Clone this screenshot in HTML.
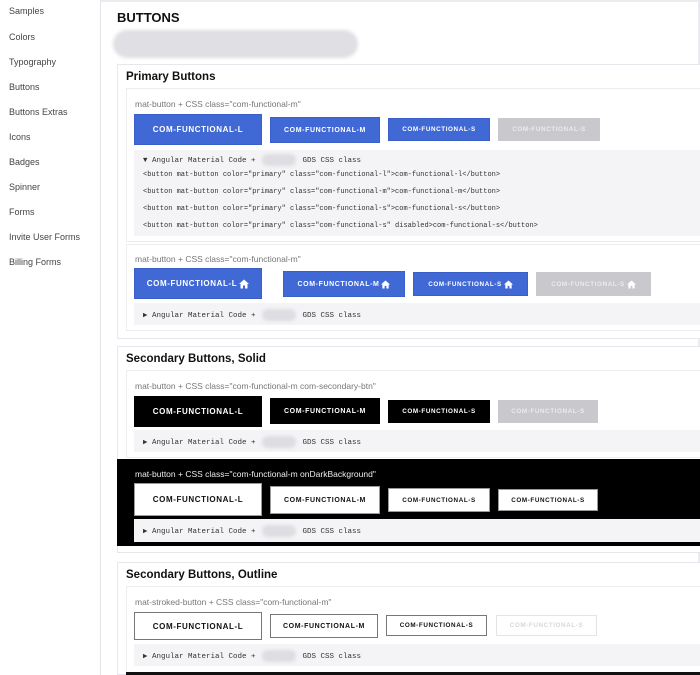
<!DOCTYPE html>
<html><head><style>
*{margin:0;padding:0;box-sizing:border-box}
body{width:700px;height:675px;overflow:hidden;background:#fff;font-family:"Liberation Sans",sans-serif;position:relative;color:#222}
.a{position:absolute}
.nav{font-size:9px;color:#444;left:9px}
.side{left:0;top:0;width:101px;height:675px;border-right:1px solid #e4e4ea;background:#fff}
.card{border:1px solid #e6e6ec;border-right:none;background:#fff}
.inner{border:1px solid #ececf1;border-right:none;background:#fff}
.h{font-weight:bold;font-size:11.5px;color:#111}
.lbl{font-size:8.5px;color:#777}
.b{display:flex;align-items:center;justify-content:center;font-weight:bold;color:#fff;letter-spacing:.6px;white-space:nowrap}
.bl{background:#4169d6;border:1px solid #3a5fc8}
.g{background:#c9c8cc;color:#eceaee}
.k{background:#000}
.w{background:#fff;color:#111;border:1px solid #999}
.code{background:#f4f3f6;font-family:"Liberation Mono",monospace;font-size:7px;color:#333}
.sum{font-family:"Liberation Mono",monospace;font-size:7.5px;color:#333}
.blur{display:inline-block;width:34px;height:12px;background:#dedde2;border-radius:6px;vertical-align:middle;filter:blur(1.5px);margin:0 2px}
.f1{font-size:8px}.f2{font-size:7px}.f3{font-size:6.3px}
svg{margin-left:2px}
</style></head><body>
<div class="a side"></div>
<div class="a nav" style="top:6px">Samples</div>
<div class="a nav" style="top:32px">Colors</div>
<div class="a nav" style="top:57px">Typography</div>
<div class="a nav" style="top:82px">Buttons</div>
<div class="a nav" style="top:107px">Buttons Extras</div>
<div class="a nav" style="top:132px">Icons</div>
<div class="a nav" style="top:157px">Badges</div>
<div class="a nav" style="top:182px">Spinner</div>
<div class="a nav" style="top:207px">Forms</div>
<div class="a nav" style="top:232px">Invite User Forms</div>
<div class="a nav" style="top:257px">Billing Forms</div>
<div class="a" style="left:101px;top:0;width:599px;height:2px;background:#ececf0"></div>
<div class="a" style="left:698px;top:0;width:2px;height:675px;background:#ececf0"></div>

<div class="a h" style="left:117px;top:10px;font-size:13px">BUTTONS</div>
<div class="a" style="left:113px;top:30px;width:245px;height:28px;border-radius:14px;background:#e0dfe3;filter:blur(1.5px)"></div>

<div class="a card" style="left:117px;top:64px;width:583px;height:275px"></div>
<div class="a h" style="left:126px;top:71px">Primary Buttons</div>
<div class="a inner" style="left:126px;top:88px;width:574px;height:154px"></div>
<div class="a lbl" style="left:135px;top:99px">mat-button + CSS class="com-functional-m"</div>
<div class="a b bl f1" style="left:134px;top:114px;width:128px;height:31px">COM-FUNCTIONAL-L</div>
<div class="a b bl f2" style="left:270px;top:117px;width:110px;height:26px">COM-FUNCTIONAL-M</div>
<div class="a b bl f3" style="left:388px;top:118px;width:102px;height:23px">COM-FUNCTIONAL-S</div>
<div class="a b g f3" style="left:498px;top:118px;width:102px;height:23px">COM-FUNCTIONAL-S</div>
<div class="a code" style="left:134px;top:150px;width:566px;height:86px"></div>
<div class="a sum" style="left:143px;top:154px">▼ Angular Material Code + <span class="blur"></span> GDS CSS class</div>
<div class="a code" style="left:143px;top:171px;background:none">&lt;button mat-button color="primary" class="com-functional-l"&gt;com-functional-l&lt;/button&gt;</div>
<div class="a code" style="left:143px;top:188px;background:none">&lt;button mat-button color="primary" class="com-functional-m"&gt;com-functional-m&lt;/button&gt;</div>
<div class="a code" style="left:143px;top:205px;background:none">&lt;button mat-button color="primary" class="com-functional-s"&gt;com-functional-s&lt;/button&gt;</div>
<div class="a code" style="left:143px;top:222px;background:none">&lt;button mat-button color="primary" class="com-functional-s" disabled&gt;com-functional-s&lt;/button&gt;</div>

<div class="a inner" style="left:126px;top:244px;width:574px;height:87px"></div>
<div class="a lbl" style="left:135px;top:254px">mat-button + CSS class="com-functional-m"</div>
<div class="a b bl f1" style="left:134px;top:268px;width:128px;height:31px">COM-FUNCTIONAL-L<svg width="10" height="10" viewBox="0 0 10 10"><path d="M5 0.5L0 5H1.5V9.5H4V6.5H6V9.5H8.5V5H10Z" fill="#fff"/></svg></div>
<div class="a b bl f2" style="left:283px;top:271px;width:122px;height:26px">COM-FUNCTIONAL-M<svg width="9" height="9" viewBox="0 0 10 10"><path d="M5 0.5L0 5H1.5V9.5H4V6.5H6V9.5H8.5V5H10Z" fill="#fff"/></svg></div>
<div class="a b bl f3" style="left:413px;top:272px;width:115px;height:24px">COM-FUNCTIONAL-S<svg width="9" height="9" viewBox="0 0 10 10"><path d="M5 0.5L0 5H1.5V9.5H4V6.5H6V9.5H8.5V5H10Z" fill="#fff"/></svg></div>
<div class="a b g f3" style="left:536px;top:272px;width:115px;height:24px">COM-FUNCTIONAL-S<svg width="9" height="9" viewBox="0 0 10 10"><path d="M5 0.5L0 5H1.5V9.5H4V6.5H6V9.5H8.5V5H10Z" fill="#fff"/></svg></div>
<div class="a code" style="left:134px;top:303px;width:566px;height:22px"></div>
<div class="a sum" style="left:143px;top:309px">▶ Angular Material Code + <span class="blur"></span> GDS CSS class</div>

<div class="a card" style="left:117px;top:346px;width:583px;height:207px"></div>
<div class="a h" style="left:126px;top:353px">Secondary Buttons, Solid</div>
<div class="a inner" style="left:126px;top:370px;width:574px;height:88px"></div>
<div class="a lbl" style="left:135px;top:381px">mat-button + CSS class="com-functional-m com-secondary-btn"</div>
<div class="a b k f1" style="left:134px;top:396px;width:128px;height:31px">COM-FUNCTIONAL-L</div>
<div class="a b k f2" style="left:270px;top:398px;width:110px;height:26px">COM-FUNCTIONAL-M</div>
<div class="a b k f3" style="left:388px;top:400px;width:102px;height:23px">COM-FUNCTIONAL-S</div>
<div class="a b g f3" style="left:498px;top:400px;width:100px;height:23px">COM-FUNCTIONAL-S</div>
<div class="a code" style="left:134px;top:430px;width:566px;height:22px"></div>
<div class="a sum" style="left:143px;top:436px">▶ Angular Material Code + <span class="blur"></span> GDS CSS class</div>
<div class="a" style="left:117px;top:459px;width:583px;height:87px;background:#000"></div>
<div class="a lbl" style="left:135px;top:469px;color:#eee">mat-button + CSS class="com-functional-m onDarkBackground"</div>
<div class="a b w f1" style="left:134px;top:483px;width:128px;height:33px">COM-FUNCTIONAL-L</div>
<div class="a b w f2" style="left:270px;top:486px;width:110px;height:28px">COM-FUNCTIONAL-M</div>
<div class="a b w f3" style="left:388px;top:488px;width:102px;height:24px">COM-FUNCTIONAL-S</div>
<div class="a b w f3" style="left:498px;top:489px;width:100px;height:22px">COM-FUNCTIONAL-S</div>
<div class="a code" style="left:134px;top:519px;width:566px;height:23px"></div>
<div class="a sum" style="left:143px;top:525px">▶ Angular Material Code + <span class="blur"></span> GDS CSS class</div>

<div class="a card" style="left:117px;top:562px;width:583px;height:113px"></div>
<div class="a h" style="left:126px;top:569px">Secondary Buttons, Outline</div>
<div class="a inner" style="left:126px;top:586px;width:574px;height:89px"></div>
<div class="a lbl" style="left:135px;top:597px">mat-stroked-button + CSS class="com-functional-m"</div>
<div class="a b w f1" style="left:134px;top:612px;width:128px;height:28px;border-color:#777">COM-FUNCTIONAL-L</div>
<div class="a b w f2" style="left:270px;top:614px;width:108px;height:24px;border-color:#777">COM-FUNCTIONAL-M</div>
<div class="a b w f3" style="left:386px;top:615px;width:101px;height:21px;border-color:#777">COM-FUNCTIONAL-S</div>
<div class="a b w f3" style="left:496px;top:615px;width:101px;height:21px;border-color:#e4e4e8;color:#d8d8dc">COM-FUNCTIONAL-S</div>
<div class="a code" style="left:134px;top:644px;width:566px;height:22px"></div>
<div class="a sum" style="left:143px;top:650px">▶ Angular Material Code + <span class="blur"></span> GDS CSS class</div>
<div class="a" style="left:126px;top:672px;width:574px;height:3px;background:#111"></div>
</body></html>
